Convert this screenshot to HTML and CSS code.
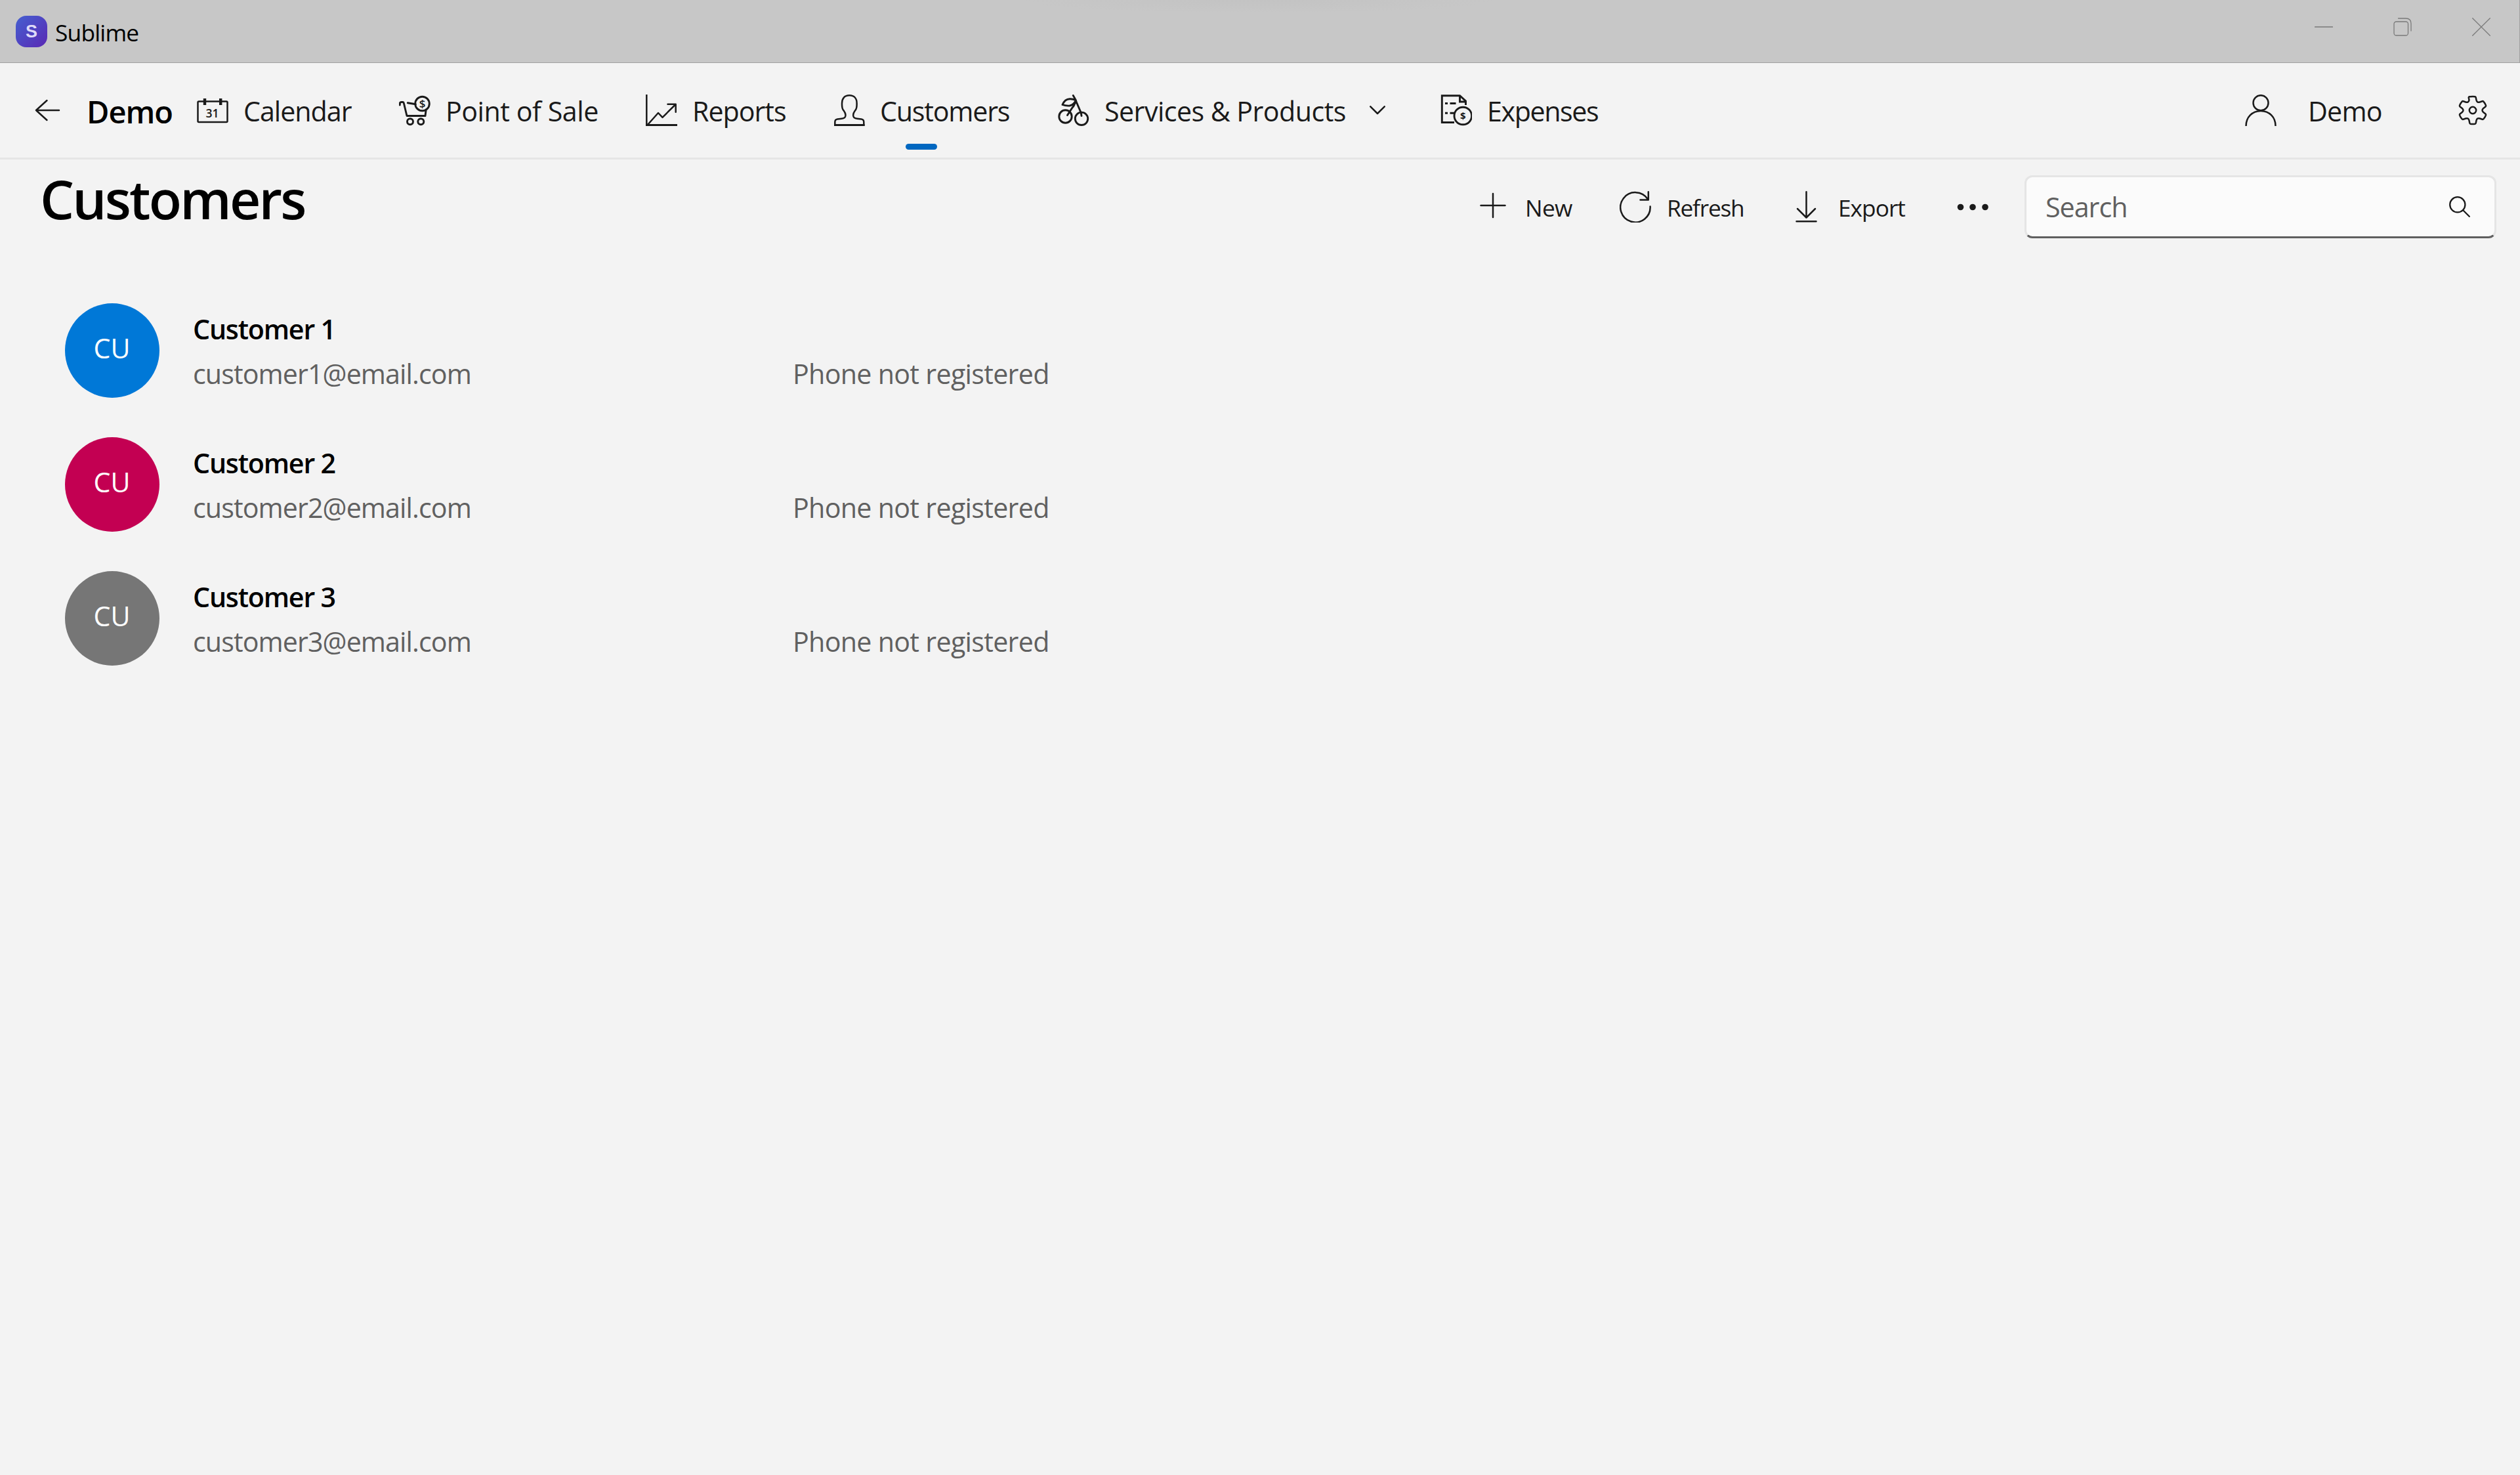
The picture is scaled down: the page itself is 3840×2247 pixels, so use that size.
FILE: index.html
```html
<!DOCTYPE html>
<html lang="en">
<head>
  <meta charset="UTF-8">
  <title>Sublime</title>
  <link rel="stylesheet" href="styles.css">
</head>
<body>
  <header class="titlebar">
    <div class="app-logo">S</div>
    <div class="app-name">Sublime</div>
    <div class="window-buttons">
      <button><svg viewBox="0 0 28 28"><path d="M.5 14h27"/></svg></button>
      <button><svg viewBox="0 0 28 28"><rect x="1" y="6" width="21.5" height="21" rx="3.5"/><path d="M7.5 1H19q8 0 8 8v11"/></svg></button>
      <button><svg viewBox="0 0 28 28"><path d="M.7.7l26.6 26.6M27.3.7L.7 27.3"/></svg></button>
    </div>
  </header>

  <nav class="navbar">
    <a class="back"><svg class="icon" viewBox="0 0 48 48"><path d="M42 24H7M23.5 9L7 24l16.5 15"/></svg></a>
    <div class="brand">Demo</div>
    <div class="nav-links">
      <a class="nav-item calendar">
        <svg class="icon" viewBox="0 0 48 48">
          <rect x="1.5" y="10.5" width="45" height="31.5" rx="1.5"/>
          <path class="thick" d="M12 6v10M36.2 6v10"/>
          <text x="23.6" y="35" font-size="17.5">31</text>
        </svg>
        <span>Calendar</span>
      </a>
      <a class="nav-item pos">
        <svg class="icon bold" viewBox="0 0 48 48">
          <path d="M1.3 16v-2q0-2.5 2.5-2.5h1.7q1.5 0 1.8 1.5l4.7 19.5h28l1-8M13.3 12.8l12 2"/>
          <circle cx="35.5" cy="14" r="10.8"/>
          <circle cx="17" cy="41.3" r="4.5"/>
          <circle cx="33.3" cy="41.3" r="4.5"/>
          <text x="35.5" y="20" font-size="17">$</text>
        </svg>
        <span>Point of Sale</span>
      </a>
      <a class="nav-item reports">
        <svg class="icon" viewBox="0 0 48 48">
          <path d="M1.3 0v48M2.5 46.5L19 28l6.5 6.8L45.5 15M33.5 14.7h12.2v12"/>
          <path class="base" d="M0 46.5h48"/>
        </svg>
        <span>Reports</span>
      </a>
      <a class="nav-item customers active">
        <svg class="icon" viewBox="0 0 48 48">
          <path d="M24.3 1.3c-7.5 0-11.3 4.8-11.3 12 0 4-.3 7 1.7 10 2 2.8 3.8 4.5 3.8 8 0 4-2 5-6 5.400l-6.500.8c-3 .5-3.700 2-3.700 4.500v5h44v-5c0-2.500-.7-4-3.700-4.500l-6.500-.8c-4-.4-6-1.400-6-5.400 0-3.500 1.800-5.200 3.800-8 2-3 1.700-6 1.700-10 0-7.200-3.800-12-11.300-12z"/>
          <path class="base" d="M1 46.5h46.6"/>
        </svg>
        <span>Customers</span>
      </a>
      <a class="nav-item services">
        <svg class="icon bold" viewBox="0 0 48 48">
          <circle cx="11.5" cy="33.5" r="9.7"/>
          <circle cx="36" cy="36.8" r="9.7"/>
          <path d="M23.3 1.500Q27 7 28.500 12l6 14q1.300 3 1.500 6.500M27 8q-1 8-5 12l-7.500 11.500M7 15.500q3.500-8.500 11-8.800 5-.2 9.500 2-3.500 7.500-9.500 8.300-6 .5-11-1.500z"/>
        </svg>
        <span>Services &amp; Products</span>
        <svg class="chevron" viewBox="0 0 24 14"><path d="M1.3 1.3L12 12 22.7 1.3"/></svg>
      </a>
      <a class="nav-item expenses">
        <svg class="icon bold square" viewBox="0 0 48 48">
          <path d="M21 42.5H2.300V1.700h27.200l9 8.300v6M29.500 1.700v9.300h9M7 13.500h4M14.500 13.500h9M7 28.300h4M14.500 28.300h7"/>
          <circle cx="34.3" cy="32.5" r="13.3"/>
          <text class="strong" x="34.3" y="38" font-size="15">$</text>
        </svg>
        <span>Expenses</span>
      </a>
    </div>
    <div class="nav-right">
      <a class="user">
        <svg class="icon" viewBox="0 0 48 48">
          <circle cx="24" cy="12.7" r="11.5"/>
          <path d="M1.5 48C1.500 34.500 11 25 24 25s22.500 9.500 22.500 23"/>
        </svg>
        <span>Demo</span>
      </a>
      <a class="settings">
        <svg class="icon" viewBox="-24 -24 48 48">
          <path d="M-3.500-20.700Q0-21.400 3.500-20.700q1 .3 1.200 1.200L5.500-15.500Q6.400-11.100 10.700-12.500L14.500-13.800q1.200-.3 1.800.5Q19-10.300 20-7.300q.3 1-.6 1.800L16.200-3Q12.800 0 16.200 3l3.200 2.500q.9.800.6 1.800-1 3-3.700 6-.6.800-1.800.5L10.700 12.500Q6.400 11.100 5.500 15.500l-.8 4q-.2.900-1.200 1.200Q0 21.400-3.500 20.700q-1-.3-1.200-1.200L-5.500 15.500Q-6.400 11.100-10.700 12.500l-3.800 1.300q-1.200.3-1.800-.5-2.700-3-3.700-6-.3-1 .6-1.800L-16.200 3Q-12.800 0-16.200-3l-3.200-2.500q-.9-.8-.6-1.800 1-3 3.700-6 .6-.8 1.800-.5L-10.700-12.500Q-6.400-11.100-5.500-15.500l-.8-4q.2-.9 1.200-1.200z"/>
          <circle cx="0" cy="0" r="5.2"/>
        </svg>
      </a>
    </div>
  </nav>

  <main>
    <div class="page-header">
      <h1>Customers</h1>
      <div class="toolbar">
        <button class="tool new">
          <svg class="icon" viewBox="0 0 48 48"><path d="M23 4v36M4.500 22h37"/></svg>
          <span>New</span>
        </button>
        <button class="tool refresh">
          <svg class="icon" viewBox="0 0 48 48"><path d="M46.600 23.500A22.700 22.700 0 1 1 43 12.500M43.800 1.300v12.200H31.500"/></svg>
          <span>Refresh</span>
        </button>
        <button class="tool export">
          <svg class="icon" viewBox="0 0 48 48"><path d="M23.500 1.300V40M10 27l13.500 13.500L37 27M8.500 46.300h30"/></svg>
          <span>Export</span>
        </button>
        <button class="tool more">
          <svg class="icon" viewBox="0 0 48 48"><circle cx="5.5" cy="24.5" r="4.8"/><circle cx="24" cy="24.5" r="4.8"/><circle cx="43" cy="24.5" r="4.8"/></svg>
        </button>
        <div class="search">
          <span>Search</span>
          <svg viewBox="0 0 32 32"><circle cx="12.8" cy="12.8" r="11.6"/><path d="M21 21l9.800 9.800"/></svg>
        </div>
      </div>
    </div>

    <div class="customer-list">
      <div class="customer">
        <div class="avatar blue">CU</div>
        <div class="info">
          <div class="name">Customer 1</div>
          <div class="email">customer1@email.com</div>
        </div>
        <div class="phone">Phone not registered</div>
      </div>
      <div class="customer">
        <div class="avatar pink">CU</div>
        <div class="info">
          <div class="name">Customer 2</div>
          <div class="email">customer2@email.com</div>
        </div>
        <div class="phone">Phone not registered</div>
      </div>
      <div class="customer">
        <div class="avatar gray">CU</div>
        <div class="info">
          <div class="name">Customer 3</div>
          <div class="email">customer3@email.com</div>
        </div>
        <div class="phone">Phone not registered</div>
      </div>
    </div>
  </main>
</body>
</html>
```

FILE: styles.css
```css
* { box-sizing: border-box; }

body {
  margin: 0;
  min-height: 100vh;
  background: #f3f3f3;
  color: #1a1a1a;
  font-family: "Open Sans", "Noto Sans", sans-serif;
  font-size: 41.2px;
  letter-spacing: -1px;
  white-space: nowrap;
  overflow: hidden;
}

button {
  padding: 0;
  border: none;
  background: none;
  color: inherit;
  font: inherit;
  letter-spacing: inherit;
}

svg {
  display: block;
  flex: none;
  fill: none;
  stroke: #1a1a1a;
  stroke-width: 2.5;
  stroke-linecap: round;
  stroke-linejoin: round;
}

svg text {
  fill: #1a1a1a;
  stroke: none;
  text-anchor: middle;
  font-weight: 600;
  letter-spacing: 0;
}

.icon {
  width: 48px;
  height: 48px;
}

.icon.bold { stroke-width: 2.9; }
.icon.square { stroke-linecap: butt; stroke-linejoin: miter; }
.icon .thick { stroke-width: 4.4; stroke-linecap: butt; }
.icon .base { stroke-width: 3; stroke-linecap: butt; }
svg .strong { font-weight: 700; }

/* title bar */
.titlebar {
  display: flex;
  align-items: center;
  height: 96px;
  padding-left: 24px;
  border-bottom: 1px solid #a0a0a0;
  border-right: 1px solid #a0a0a0;
  background: radial-gradient(ellipse 360px 20px at 1920px 0, #c3c3c3, #c7c7c7) #c7c7c7;
}

.app-logo {
  width: 48px;
  height: 48px;
  border-radius: 16px;
  background: linear-gradient(135deg, #4560d0, #5a28b4);
  color: #dedaf8;
  font-family: "Liberation Sans", sans-serif;
  font-size: 27px;
  font-weight: bold;
  line-height: 48px;
  text-align: center;
  letter-spacing: 0;
}

.app-name {
  margin-left: 12px;
  padding-top: 3px;
  color: #000;
  font-size: 35.3px;
  letter-spacing: -0.8px;
}

.window-buttons {
  display: flex;
  align-self: flex-start;
  margin-left: auto;
  margin-right: -2px;
}

.window-buttons button {
  display: flex;
  align-items: center;
  justify-content: center;
  width: 120px;
  height: 81px;
}

.window-buttons svg {
  width: 28px;
  height: 28px;
  stroke: #7a7a7a;
  stroke-width: 1.3;
}

/* navigation */
.navbar {
  display: flex;
  align-items: center;
  height: 147px;
  padding: 0 48px;
  border-bottom: 3px solid #e5e5e5;
}

.brand {
  width: 168px;
  margin-left: 36px;
  padding-top: 3px;
  color: #000;
  font-size: 47px;
  font-weight: 600;
}

.nav-links {
  display: flex;
  height: 144px;
}

.nav-item {
  display: flex;
  align-items: center;
  gap: 23px;
  position: relative;
}

.nav-item span,
.user span {
  padding-top: 2px;
}

.calendar { width: 308px; }
.pos { width: 376px; letter-spacing: -0.47px; }
.reports { width: 286px; }
.customers { width: 342px; letter-spacing: -1.2px; }
.services { width: 583px; letter-spacing: -0.55px; }
.expenses { letter-spacing: -1.4px; }

.nav-item.active::after {
  content: "";
  position: absolute;
  left: 110px;
  bottom: 12px;
  width: 48px;
  height: 9px;
  border-radius: 5px;
  background: #0067c0;
}

.chevron {
  width: 24px;
  height: 14px;
  margin-left: 13px;
}

.nav-right {
  display: flex;
  align-items: center;
  margin-left: auto;
}

.user {
  display: flex;
  align-items: center;
  gap: 48px;
  width: 323px;
  letter-spacing: -0.8px;
}

/* page header */
.page-header {
  display: flex;
  justify-content: space-between;
  padding: 0 36px 0 61px;
}

h1 {
  margin: 0;
  color: #000;
  font-size: 82.3px;
  font-weight: 600;
  line-height: 119px;
  letter-spacing: -2.8px;
}

.toolbar {
  display: flex;
  align-items: center;
  height: 96px;
  margin-top: 24px;
}

.tool {
  display: flex;
  align-items: center;
  gap: 24px;
  font-size: 35.3px;
}

.tool span { padding-top: 2px; }
.new { width: 216px; letter-spacing: -0.7px; }
.refresh { width: 261px; letter-spacing: -1.25px; }
.export { width: 253px; }
.more { width: 103px; }
.more svg { fill: #1a1a1a; stroke: none; }

.search {
  display: flex;
  align-items: center;
  justify-content: space-between;
  width: 719px;
  height: 96px;
  padding: 0 37px 0 29px;
  border: 3px solid #e5e5e5;
  border-bottom-color: #606060;
  border-radius: 12px;
  background: #fbfbfb;
  color: #606060;
}

.search svg {
  width: 32px;
  height: 32px;
  stroke-width: 2.3;
}

/* customers */
.customer-list {
  padding: 69px 0 0 99px;
}

.customer {
  display: grid;
  grid-template-columns: 195px 914px auto;
  align-items: center;
  height: 204px;
  line-height: 68px;
}

.avatar {
  width: 144px;
  height: 144px;
  padding-right: 1px;
  border-radius: 50%;
  color: #fff;
  line-height: 136px;
  text-align: center;
  letter-spacing: 0;
}

.blue { background: #0078d7; }
.pink { background: #c30052; }
.gray { background: #767676; }

.info { padding-top: 1px; }

.name {
  color: #000;
  font-weight: 600;
  letter-spacing: -1.2px;
}

.email {
  color: #606060;
  letter-spacing: -0.9px;
}

.phone {
  padding-top: 69px;
  color: #606060;
  letter-spacing: -0.7px;
}
```
